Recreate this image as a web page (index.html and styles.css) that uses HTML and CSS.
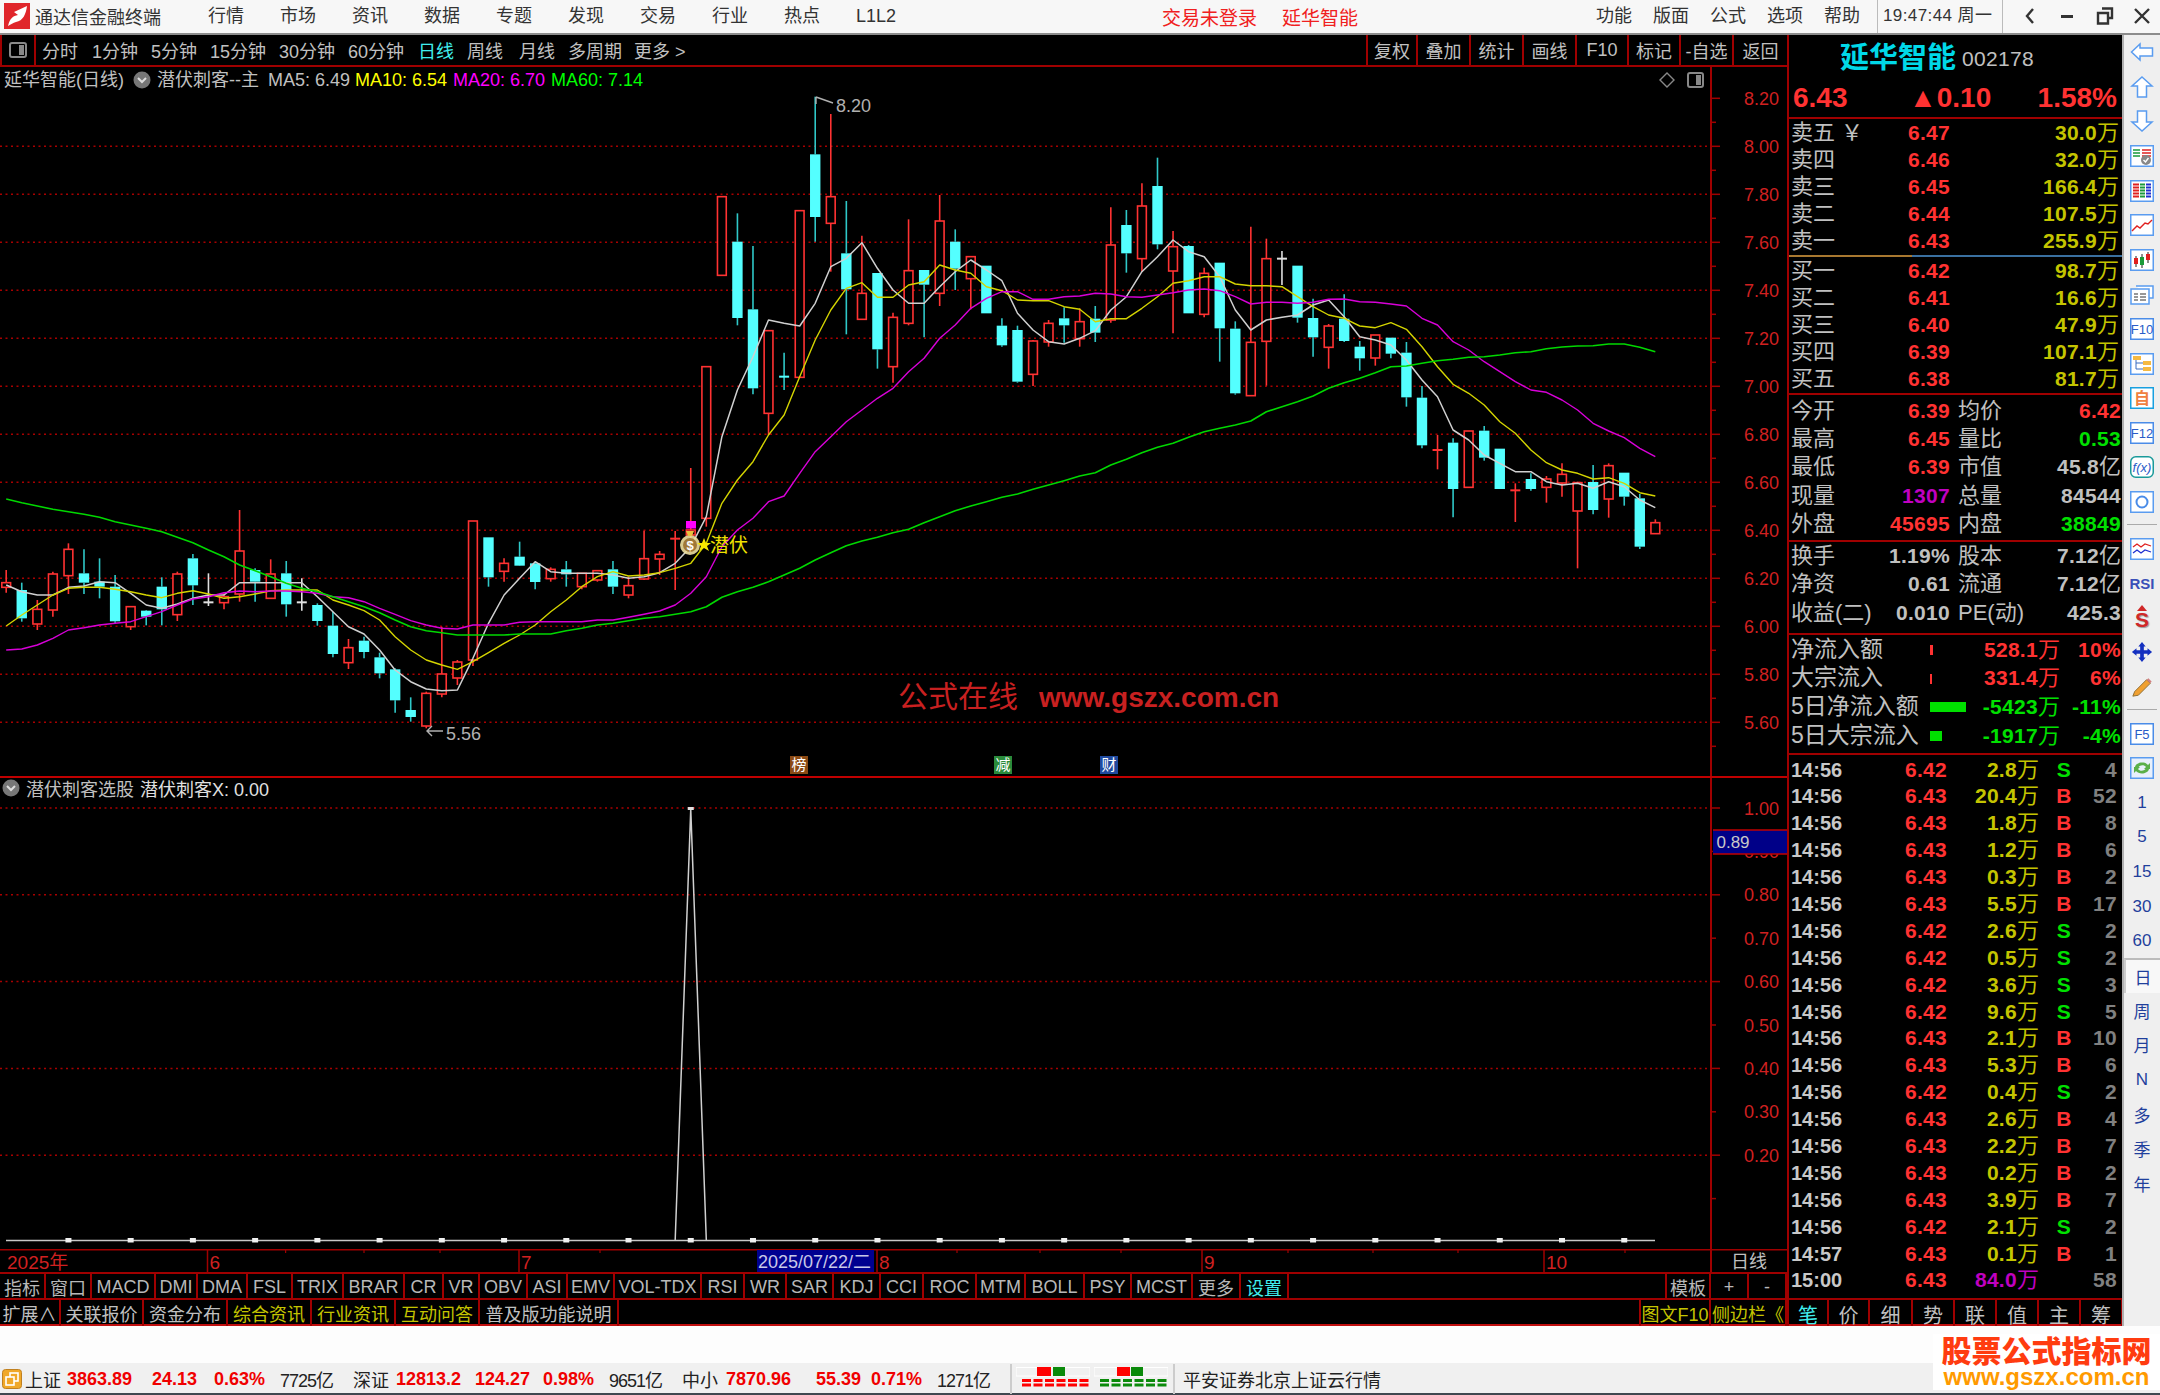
FILE: index.html
```html
<!DOCTYPE html>
<html lang="zh-CN">
<head>
<meta charset="utf-8">
<title>通达信金融终端</title>
<link rel="stylesheet" href="styles.css">
</head>
<body>
<div class="app">
  <header class="titlebar">
    <svg class="logo" viewBox="0 0 26 26"><rect width="26" height="26" fill="#e0262b"/><path d="M4 23 C6 15 9 13 14 12 L10 9 L23 3 C22 11 19 18 12 19 C9 20 7 21 4 23Z" fill="#fff"/></svg>
    <span class="app-name">通达信金融终端</span>
    <nav class="menu menu-main"><span>行情</span><span>市场</span><span>资讯</span><span>数据</span><span>专题</span><span>发现</span><span>交易</span><span>行业</span><span>热点</span><span>L1L2</span></nav>
    <div class="login"><span>交易未登录</span><span>延华智能</span></div>
    <nav class="menu menu-right"><span>功能</span><span>版面</span><span>公式</span><span>选项</span><span>帮助</span></nav>
    <div class="clock">19:47:44 周一</div>
    <div class="winbtns">
      <svg viewBox="0 0 20 20"><path d="M13 3 L7 10 L13 17" fill="none" stroke="#333" stroke-width="2.4"/></svg>
      <svg viewBox="0 0 20 20"><rect x="4" y="9" width="12" height="3" fill="#333"/></svg>
      <svg viewBox="0 0 20 20"><path d="M7 2.5 H17 V12 H13 M3 7 H13 V17.5 H3 Z" fill="none" stroke="#333" stroke-width="2.4"/></svg>
      <svg viewBox="0 0 20 20"><path d="M3 3 L17 17 M17 3 L3 17" stroke="#333" stroke-width="2.4"/></svg>
    </div>
  </header>

  <div class="body">
    <main class="main">
      <div class="period-bar">
        <div class="period-toggle"><svg viewBox="0 0 20 18"><rect x="2" y="2" width="16" height="14" rx="2" fill="none" stroke="#8a8a8a" stroke-width="2"/><rect x="11" y="4" width="5" height="10" fill="#8a8a8a"/></svg></div>
        <div class="periods"><span>分时</span><span>1分钟</span><span>5分钟</span><span>15分钟</span><span>30分钟</span><span>60分钟</span><span class="cyan">日线</span><span>周线</span><span>月线</span><span>多周期</span><span>更多 &gt;</span></div>
        <div class="chart-btns"><span>复权</span><span>叠加</span><span>统计</span><span>画线</span><span>F10</span><span>标记</span><span>-自选</span><span>返回</span></div>
      </div>

      <div class="legend">
        <span class="l-name">延华智能(日线)</span>
        <svg class="l-dot" viewBox="0 0 18 18"><circle cx="9" cy="9" r="8.5" fill="#777"/><path d="M5 7 L9 11 L13 7" fill="none" stroke="#ddd" stroke-width="2"/></svg>
        <span class="l-formula">潜伏刺客--主</span>
        <span class="l-ma5">MA5: 6.49</span>
        <span class="l-ma10">MA10: 6.54</span>
        <span class="l-ma20">MA20: 6.70</span>
        <span class="l-ma60">MA60: 7.14</span>
        <svg class="l-tools" viewBox="0 0 46 18"><path d="M8 2 L15 9 L8 16 L1 9 Z" fill="none" stroke="#888" stroke-width="1.4"/><rect x="29" y="2" width="15" height="14" rx="2" fill="none" stroke="#888" stroke-width="2"/><rect x="37" y="4" width="5" height="10" fill="#888"/></svg>
      </div>
      <svg id="price-chart" class="chart price-chart" viewBox="0 87 1787 689"></svg>

      <div class="ind-legend">
        <svg class="l-dot" viewBox="0 0 18 18"><circle cx="9" cy="9" r="8.5" fill="#777"/><path d="M5 7 L9 11 L13 7" fill="none" stroke="#ddd" stroke-width="2"/></svg>
        <span>潜伏刺客选股</span><span class="ind-val">潜伏刺客X: 0.00</span>
      </div>
      <svg id="ind-chart" class="chart ind-chart" viewBox="0 798 1787 451"></svg>
      <svg id="date-axis" class="chart date-axis" viewBox="0 1249 1787 23"></svg>

      <div class="indicator-bar">
        <span>指标</span><span>窗口</span><span>MACD</span><span>DMI</span><span>DMA</span><span>FSL</span><span>TRIX</span><span>BRAR</span><span>CR</span><span>VR</span><span>OBV</span><span>ASI</span><span>EMV</span><span>VOL-TDX</span><span>RSI</span><span>WR</span><span>SAR</span><span>KDJ</span><span>CCI</span><span>ROC</span><span>MTM</span><span>BOLL</span><span>PSY</span><span>MCST</span><span>更多</span><span class="cyan">设置</span>
        <span class="tpl">模板</span><span>+</span><span>-</span>
      </div>
      <div class="ext-bar">
        <span>扩展∧</span><span>关联报价</span><span>资金分布</span><span class="yellow">综合资讯</span><span class="yellow">行业资讯</span><span class="yellow">互动问答</span><span>普及版功能说明</span>
        <span class="yellow ext-f10">图文F10</span><span class="yellow">侧边栏《</span>
      </div>
    </main>

    <aside class="quote">
      <div class="q-head"><span class="q-name">延华智能</span><span class="q-code">002178</span></div>
      <div class="q-price"><span>6.43</span><span>▲0.10</span><span>1.58%</span></div>

      <div class="q-book q-sell">
        <div class="book-row"><span class="lb">卖五 ￥</span><b class="red">6.47</b><b class="vol">30.0<i>万</i></b></div>
        <div class="book-row"><span class="lb">卖四</span><b class="red">6.46</b><b class="vol">32.0<i>万</i></b></div>
        <div class="book-row"><span class="lb">卖三</span><b class="red">6.45</b><b class="vol">166.4<i>万</i></b></div>
        <div class="book-row"><span class="lb">卖二</span><b class="red">6.44</b><b class="vol">107.5<i>万</i></b></div>
        <div class="book-row"><span class="lb">卖一</span><b class="red">6.43</b><b class="vol">255.9<i>万</i></b></div>
      </div>
      <div class="q-split"></div>
      <div class="q-book q-buy">
        <div class="book-row"><span class="lb">买一</span><b class="red">6.42</b><b class="vol">98.7<i>万</i></b></div>
        <div class="book-row"><span class="lb">买二</span><b class="red">6.41</b><b class="vol">16.6<i>万</i></b></div>
        <div class="book-row"><span class="lb">买三</span><b class="red">6.40</b><b class="vol">47.9<i>万</i></b></div>
        <div class="book-row"><span class="lb">买四</span><b class="red">6.39</b><b class="vol">107.1<i>万</i></b></div>
        <div class="book-row"><span class="lb">买五</span><b class="red">6.38</b><b class="vol">81.7<i>万</i></b></div>
      </div>

      <div class="q-stats">
        <div class="stat-row"><span class="lb">今开</span><b class="red">6.39</b><span class="lb">均价</span><b class="red">6.42</b></div>
        <div class="stat-row"><span class="lb">最高</span><b class="red">6.45</b><span class="lb">量比</span><b class="green">0.53</b></div>
        <div class="stat-row"><span class="lb">最低</span><b class="red">6.39</b><span class="lb">市值</span><b class="grey">45.8<i>亿</i></b></div>
        <div class="stat-row"><span class="lb">现量</span><b class="purple">1307</b><span class="lb">总量</span><b class="grey">84544</b></div>
        <div class="stat-row"><span class="lb">外盘</span><b class="red">45695</b><span class="lb">内盘</span><b class="green">38849</b></div>
      </div>
      <div class="q-fund">
        <div class="stat-row"><span class="lb">换手</span><b class="grey">1.19%</b><span class="lb">股本</span><b class="grey">7.12<i>亿</i></b></div>
        <div class="stat-row"><span class="lb">净资</span><b class="grey">0.61</b><span class="lb">流通</span><b class="grey">7.12<i>亿</i></b></div>
        <div class="stat-row"><span class="lb">收益(二)</span><b class="grey">0.010</b><span class="lb">PE(动)</span><b class="grey">425.3</b></div>
      </div>
      <div class="q-flow">
        <div class="flow-row"><span class="lb">净流入额</span><span class="flow-bar"><em class="bg-red" style="width:3px"></em></span><b class="red">528.1<i>万</i></b><b class="red">10%</b></div>
        <div class="flow-row"><span class="lb">大宗流入</span><span class="flow-bar"><em class="bg-red" style="width:2px"></em></span><b class="red">331.4<i>万</i></b><b class="red">6%</b></div>
        <div class="flow-row"><span class="lb">5日净流入额</span><span class="flow-bar"><em class="bg-green" style="width:36px"></em></span><b class="green">-5423<i>万</i></b><b class="green">-11%</b></div>
        <div class="flow-row"><span class="lb">5日大宗流入</span><span class="flow-bar"><em class="bg-green" style="width:12px"></em></span><b class="green">-1917<i>万</i></b><b class="green">-4%</b></div>
      </div>

      <div class="q-ticks">
        <div class="tick"><b class="time">14:56</b><b class="red">6.42</b><b class="vol">2.8<i>万</i></b><b class="green">S</b><b class="cnt">4</b></div>
        <div class="tick"><b class="time">14:56</b><b class="red">6.43</b><b class="vol">20.4<i>万</i></b><b class="red">B</b><b class="cnt">52</b></div>
        <div class="tick"><b class="time">14:56</b><b class="red">6.43</b><b class="vol">1.8<i>万</i></b><b class="red">B</b><b class="cnt">8</b></div>
        <div class="tick"><b class="time">14:56</b><b class="red">6.43</b><b class="vol">1.2<i>万</i></b><b class="red">B</b><b class="cnt">6</b></div>
        <div class="tick"><b class="time">14:56</b><b class="red">6.43</b><b class="vol">0.3<i>万</i></b><b class="red">B</b><b class="cnt">2</b></div>
        <div class="tick"><b class="time">14:56</b><b class="red">6.43</b><b class="vol">5.5<i>万</i></b><b class="red">B</b><b class="cnt">17</b></div>
        <div class="tick"><b class="time">14:56</b><b class="red">6.42</b><b class="vol">2.6<i>万</i></b><b class="green">S</b><b class="cnt">2</b></div>
        <div class="tick"><b class="time">14:56</b><b class="red">6.42</b><b class="vol">0.5<i>万</i></b><b class="green">S</b><b class="cnt">2</b></div>
        <div class="tick"><b class="time">14:56</b><b class="red">6.42</b><b class="vol">3.6<i>万</i></b><b class="green">S</b><b class="cnt">3</b></div>
        <div class="tick"><b class="time">14:56</b><b class="red">6.42</b><b class="vol">9.6<i>万</i></b><b class="green">S</b><b class="cnt">5</b></div>
        <div class="tick"><b class="time">14:56</b><b class="red">6.43</b><b class="vol">2.1<i>万</i></b><b class="red">B</b><b class="cnt">10</b></div>
        <div class="tick"><b class="time">14:56</b><b class="red">6.43</b><b class="vol">5.3<i>万</i></b><b class="red">B</b><b class="cnt">6</b></div>
        <div class="tick"><b class="time">14:56</b><b class="red">6.42</b><b class="vol">0.4<i>万</i></b><b class="green">S</b><b class="cnt">2</b></div>
        <div class="tick"><b class="time">14:56</b><b class="red">6.43</b><b class="vol">2.6<i>万</i></b><b class="red">B</b><b class="cnt">4</b></div>
        <div class="tick"><b class="time">14:56</b><b class="red">6.43</b><b class="vol">2.2<i>万</i></b><b class="red">B</b><b class="cnt">7</b></div>
        <div class="tick"><b class="time">14:56</b><b class="red">6.43</b><b class="vol">0.2<i>万</i></b><b class="red">B</b><b class="cnt">2</b></div>
        <div class="tick"><b class="time">14:56</b><b class="red">6.43</b><b class="vol">3.9<i>万</i></b><b class="red">B</b><b class="cnt">7</b></div>
        <div class="tick"><b class="time">14:56</b><b class="red">6.42</b><b class="vol">2.1<i>万</i></b><b class="green">S</b><b class="cnt">2</b></div>
        <div class="tick"><b class="time">14:57</b><b class="red">6.43</b><b class="vol">0.1<i>万</i></b><b class="red">B</b><b class="cnt">1</b></div>
        <div class="tick"><b class="time">15:00</b><b class="red">6.43</b><b class="purple">84.0<i>万</i></b><b></b><b class="cnt">58</b></div>
      </div>
      <div class="q-tabs"><span class="cyan">笔</span><span>价</span><span>细</span><span>势</span><span>联</span><span>值</span><span>主</span><span>筹</span></div>
    </aside>

    <nav class="sidebar">
      <div class="tool"><svg viewBox="0 0 24 22"><path d="M1.5 11 L10 3 V7 H22.5 V15 H10 V19 Z" fill="#fff" stroke="#5a9cf0" stroke-width="1.5"/></svg></div>
      <div class="tool"><svg viewBox="0 0 24 22"><path d="M12 1 L22 10 H16.5 V21 H7.5 V10 H2 Z" fill="#fff" stroke="#5a9cf0" stroke-width="1.5"/></svg></div>
      <div class="tool"><svg viewBox="0 0 24 22"><path d="M7.5 1 H16.5 V12 H22 L12 21 L2 12 H7.5 Z" fill="#fff" stroke="#5a9cf0" stroke-width="1.5"/></svg></div>
      <div class="tool"><svg viewBox="0 0 24 22"><rect x=".75" y=".75" width="22.5" height="20.5" fill="#fff" stroke="#5a9cf0" stroke-width="1.5"/><path d="M3 5 H10 M3 8 H10 M3 11 H10" stroke="#1a9a3a" stroke-width="1.6"/><path d="M12 5 H21 M12 8 H21 M12 11 H21" stroke="#e02020" stroke-width="1.6"/><circle cx="16" cy="15" r="5" fill="#888"/><path d="M13.5 15 L15.5 17 L18.5 13" fill="none" stroke="#fff" stroke-width="1.4"/></svg></div>
      <div class="tool"><svg viewBox="0 0 24 22"><rect x=".75" y=".75" width="22.5" height="20.5" fill="#fff" stroke="#5a9cf0" stroke-width="1.5"/><path d="M3 4.5 H9 M3 7.5 H9 M3 10.5 H9 M3 13.5 H9 M3 16.5 H9" stroke="#e02020" stroke-width="1.8"/><path d="M10 4.5 H15 M10 7.5 H15 M10 10.5 H15 M10 13.5 H15 M10 16.5 H15" stroke="#1a9a3a" stroke-width="1.8"/><path d="M16 4.5 H21 M16 7.5 H21 M16 10.5 H21 M16 13.5 H21 M16 16.5 H21" stroke="#2030d0" stroke-width="1.8"/></svg></div>
      <div class="tool"><svg viewBox="0 0 24 22"><rect x=".75" y=".75" width="22.5" height="20.5" fill="#fff" stroke="#5a9cf0" stroke-width="1.5"/><path d="M2 17 L7 12 L10 14 L15 9 L18 10 L22 6" fill="none" stroke="#e02020" stroke-width="1.4"/></svg></div>
      <div class="tool"><svg viewBox="0 0 24 22"><rect x=".75" y=".75" width="22.5" height="20.5" fill="#fff" stroke="#5a9cf0" stroke-width="1.5"/><path d="M6 7 V18 M12 5 V19 M18 3 V14" stroke="#222" stroke-width="1"/><rect x="4" y="9" width="4" height="6" fill="#e02020"/><rect x="10" y="8" width="4" height="8" fill="#1a9a3a"/><rect x="16" y="5" width="4" height="6" fill="#e02020"/></svg></div>
      <div class="tool"><svg viewBox="0 0 24 22"><path d="M6 3 H23 V15 H19" fill="#fff" stroke="#5a9cf0" stroke-width="1.5"/><rect x="1" y="6" width="18" height="15" fill="#fff" stroke="#5a9cf0" stroke-width="1.5"/><path d="M4 11 H8 M4 14 H8 M4 17 H8 M10 11 H16 M10 14 H16 M10 17 H16" stroke="#777" stroke-width="1.6"/></svg></div>
      <div class="tool"><svg viewBox="0 0 24 22"><rect x=".75" y=".75" width="22.5" height="20.5" fill="#fff" stroke="#4a8ce8" stroke-width="1.5"/><text class="ico-txt" x="12" y="16" text-anchor="middle">F10</text></svg></div>
      <div class="tool"><svg viewBox="0 0 24 22"><rect x=".75" y=".75" width="22.5" height="20.5" fill="#fff" stroke="#5a9cf0" stroke-width="1.5"/><rect x="3" y="3" width="8" height="4" fill="#f5b942"/><rect x="13" y="8" width="8" height="4" fill="#f5b942"/><rect x="13" y="14" width="8" height="4" fill="#f5b942"/><path d="M6 7 V16 H13 M6 10 H13" fill="none" stroke="#3a6cc0"/></svg></div>
      <div class="tool"><svg viewBox="0 0 24 22"><rect x=".75" y=".75" width="22.5" height="20.5" fill="#fff" stroke="#18a0e0" stroke-width="1.5"/><text class="ico-zi" x="12" y="17" text-anchor="middle">自</text></svg></div>
      <div class="tool"><svg viewBox="0 0 24 22"><rect x=".75" y=".75" width="22.5" height="20.5" fill="#fff" stroke="#4a8ce8" stroke-width="1.5"/><text class="ico-txt" x="12" y="16" text-anchor="middle">F12</text></svg></div>
      <div class="tool"><svg viewBox="0 0 24 22"><rect x=".75" y=".75" width="22.5" height="20.5" rx="5" fill="#fff" stroke="#1a9a9a" stroke-width="1.5"/><text class="ico-fx" x="12" y="16" text-anchor="middle">f(x)</text></svg></div>
      <div class="tool"><svg viewBox="0 0 24 22"><rect x=".75" y=".75" width="22.5" height="20.5" fill="#fff" stroke="#5a9cf0" stroke-width="1.5"/><circle cx="12" cy="11" r="5.5" fill="none" stroke="#4a8ce8" stroke-width="2"/></svg></div>
      <div class="tool-sep"></div>
      <div class="tool"><svg viewBox="0 0 24 22"><rect x=".75" y=".75" width="22.5" height="20.5" fill="#fff" stroke="#5a9cf0" stroke-width="1.5"/><path d="M3 9 L7 6 L11 9 L15 6 L21 8" fill="none" stroke="#e02020" stroke-width="1.3"/><path d="M3 15 L7 12 L11 15 L15 12 L21 14" fill="none" stroke="#2030d0" stroke-width="1.3"/></svg></div>
      <div class="tool"><span class="ico-rsi">RSI</span></div>
      <div class="tool tool-s"><svg class="ico-s-up" viewBox="0 0 10 6"><path d="M5 0 L10 6 H0 Z" fill="#d02828"/></svg><span class="ico-s">S</span></div>
      <div class="tool"><svg viewBox="0 0 24 24"><path d="M12 1 L16 6 H14 V10 H18 V8 L23 12 L18 16 V14 H14 V18 H16 L12 23 L8 18 H10 V14 H6 V16 L1 12 L6 8 V10 H10 V6 H8 Z" fill="#1430c0"/></svg></div>
      <div class="tool"><svg viewBox="0 0 24 24"><path d="M4 17 L17 4 L21 8 L8 21 L2 22 Z" fill="#f0a030" stroke="#8a6a30"/><path d="M17 4 L21 8 L22.5 6 L19 2.5 Z" fill="#d08080"/></svg></div>
      <div class="tool-sep"></div>
      <div class="tool"><svg viewBox="0 0 24 22"><rect x=".75" y=".75" width="22.5" height="20.5" fill="#fff" stroke="#4a8ce8" stroke-width="1.5"/><text class="ico-txt" x="12" y="16" text-anchor="middle">F5</text></svg></div>
      <div class="tool"><svg viewBox="0 0 24 22"><rect x=".75" y=".75" width="22.5" height="20.5" fill="#e8f0fc" stroke="#5a9cf0" stroke-width="1.5"/><path d="M5 10 C6 5 15 4 18 8 L20 6 V12 H14 L16 10 C14 7 9 8 8 11 Z M19 12 C18 17 9 18 6 14 L4 16 V10 H10 L8 12 C10 15 15 14 16 11 Z" fill="#5ab04a"/></svg></div>
      <div class="tool tool-t">1</div><div class="tool tool-t">5</div><div class="tool tool-t">15</div><div class="tool tool-t">30</div><div class="tool tool-t">60</div>
      <div class="tool tool-t tool-on">日</div>
      <div class="tool tool-t">周</div><div class="tool tool-t">月</div><div class="tool tool-t">N</div><div class="tool tool-t">多</div><div class="tool tool-t">季</div><div class="tool tool-t">年</div>
    </nav>
  </div>

  <div class="blank"></div>

  <footer class="status">
    <svg class="st-ico" viewBox="0 0 20 20"><rect x=".5" y=".5" width="19" height="19" rx="3" fill="#f0a828" stroke="#c08020"/><rect x="8" y="4" width="8" height="8" fill="none" stroke="#fff" stroke-width="1.6"/><rect x="4" y="8" width="8" height="8" fill="#f0a828" stroke="#fff" stroke-width="1.6"/></svg>
    <span class="st-lb st-sh">上证</span><b class="st-a">3863.89</b><b class="st-b">24.13</b><b class="st-c">0.63%</b><span class="st-d">7725亿</span>
    <span class="st-lb st-sz">深证</span><b class="st-a2">12813.2</b><b class="st-b2">124.27</b><b class="st-c">0.98%</b><span class="st-d">9651亿</span>
    <span class="st-lb st-zx">中小</span><b class="st-a3">7870.96</b><b class="st-b3">55.39</b><b class="st-c">0.71%</b><span class="st-d">1271亿</span>
    <div class="st-bars">
      <svg viewBox="0 0 74 20"><path d="M0 .5 H74 V9 H0 Z" fill="none" stroke="#fff"/><rect x="21" y="0" width="14" height="9" fill="#f00"/><rect x="37" y="0" width="12" height="9" fill="#0a8a0a"/><path d="M6 13.5 H74" stroke="#f00" stroke-width="3" stroke-dasharray="9 2.5"/><path d="M6 18 H74" stroke="#f00" stroke-width="3" stroke-dasharray="9 2.5"/></svg>
      <svg viewBox="0 0 74 20"><path d="M0 .5 H74 V9 H0 Z" fill="none" stroke="#fff"/><rect x="23" y="0" width="13" height="9" fill="#f00"/><rect x="37" y="0" width="12" height="9" fill="#0a8a0a"/><path d="M6 13.5 H74" stroke="#0a8a0a" stroke-width="3" stroke-dasharray="9 2.5"/><path d="M6 18 H74" stroke="#0a8a0a" stroke-width="3" stroke-dasharray="9 2.5"/></svg>
    </div>
    <span class="st-broker">平安证券北京上证云行情</span>
  </footer>

  <div class="watermark"><strong>股票公式指标网</strong><em>www.gszx.com.cn</em></div>
</div>
<script src="chart.js"></script>
</body>
</html>
```
FILE: styles.css
```css
* { box-sizing: border-box; }
html, body { margin: 0; padding: 0; background: #f0f0f0; }
body { font-family: "Liberation Sans", "Noto Sans CJK SC", sans-serif; }
.app { position: relative; width: 2160px; height: 1395px; display: flex; flex-direction: column; overflow: hidden; }
i, em { font-style: normal; }
.cyan { color: #40eeee !important; }
.yellow { color: #c4c400 !important; }

/* title bar */
.titlebar { height: 35px; flex: none; display: flex; align-items: center; background: #f7f7f7; border-bottom: 2px solid #8c8c8c; font-size: 18px; color: #333; white-space: nowrap; padding-bottom: 1px; }
.logo { width: 26px; height: 26px; margin-left: 4px; flex: none; }
.app-name { margin-left: 5px; width: 173px; flex: none; }
.menu { display: flex; flex: none; align-items: baseline; line-height: 26px; }
.menu span { display: block; }
.menu-main { width: 720px; }
.menu-main span { width: 72px; }
.login { margin-left: 234px; width: 434px; flex: none; display: flex; gap: 25px; color: #f02020; font-size: 19px; }
.menu-right { width: 281px; }
.menu-right span { margin-right: 21px; }
.clock { width: 126px; flex: none; height: 33px; line-height: 31px; padding-left: 5px; border-left: 1px solid #bbb; border-right: 1px solid #bbb; font-size: 17px; letter-spacing: .4px; }
.winbtns { flex: 1; display: flex; justify-content: space-between; padding: 0 8px 0 17px; }
.winbtns svg { width: 20px; height: 20px; }

/* body */
.body { height: 1291px; flex: none; display: flex; background: #000; }
.main { width: 1787px; flex: none; display: flex; flex-direction: column; }
.chart { display: block; width: 1787px; flex: none; }
.price-chart { height: 689px; }
.ind-chart { height: 451px; }
.date-axis { height: 23px; }

.period-bar { height: 32px; flex: none; display: flex; border-bottom: 2px solid #a00000; font-size: 18px; color: #c0c0c0; white-space: nowrap; }
.period-toggle { width: 36px; border-left: 2px solid #a00000; border-right: 2px solid #a00000; display: flex; align-items: center; justify-content: center; }
.period-toggle svg { width: 20px; height: 18px; }
.periods { display: grid; grid-template-columns: 50px 59px 59px 69px 69px 70px 49px 52px 49px 66px 60px; padding-left: 6px; align-items: center; }
.chart-btns { margin-left: auto; width: 421px; display: grid; grid-template-columns: 50px 53px 53px 53px 52px 52px 53px 55px; }
.chart-btns span { border-left: 2px solid #a00000; display: flex; align-items: center; justify-content: center; }

.legend { height: 20px; flex: none; display: flex; align-items: baseline; line-height: 26px; font-size: 18px; color: #c0c0c0; white-space: nowrap; padding-left: 4px; background: linear-gradient(#a00000, #a00000) 1710px 0 / 2px 100% no-repeat; }
.l-name { width: 129px; }
.l-dot { width: 18px; height: 18px; flex: none; align-self: center; }
.legend .l-dot { margin-top: 5px; }
.l-formula { margin-left: 6px; width: 111px; }
.l-ma5 { width: 87px; }
.l-ma10 { width: 98px; color: #ffff00; }
.l-ma20 { width: 98px; color: #ff00ff; }
.l-ma60 { width: 100px; color: #00ff00; }
.l-tools { margin: 5px 82px 0 auto; width: 46px; height: 18px; align-self: center; }

.ind-legend { height: 22px; flex: none; display: flex; align-items: center; gap: 6px; padding-left: 2px; font-size: 18px; color: #c0c0c0; border-top: 2px solid #c00000; background: linear-gradient(#a00000, #a00000) 1710px 0 / 2px 100% no-repeat; }
.ind-val { color: #e0e0e0; }

/* svg chart text */
.axis-label { font-size: 18px; fill: #d02020; text-anchor: end; }
.date-label { font-size: 19px; fill: #d02020; }
.date-cursor { font-size: 18px; fill: #c8c8e8; }
.date-unit { font-size: 18px; fill: #c0c0c0; text-anchor: middle; }
.note { font-size: 18px; fill: #b0b0b0; }
.signal { font-size: 19px; fill: #f0e000; }
.tag { font-size: 15px; fill: #fff; text-anchor: middle; }
.gs-cn { font-size: 30px; fill: #c82020; }
.gs-en { font-size: 28px; font-weight: bold; fill: #c82020; }
.ind-current { font-size: 17px; fill: #c8c8c8; text-anchor: middle; }

.indicator-bar { height: 26px; flex: none; display: grid; grid-template-columns: 46px 46px 64px 42px 50px 45px 51px 61px 39px 36px 48px 40px 47px 87px 43px 42px 47px 47px 43px 53px 49px 59px 47px 61px 48px 48px 376px 46px 38px 38px; font-size: 18px; color: #b8b8b8; white-space: nowrap; border-top: 2px solid #a00000; }
.indicator-bar span { display: flex; align-items: center; justify-content: center; border-right: 2px solid #a00000; }
.indicator-bar .tpl { grid-column: 28; border-left: 2px solid #a00000; }
.ext-bar { height: 28px; flex: none; display: grid; grid-template-columns: 61px 83px 84px 84px 84px 84px 139px 1020px 72px 76px; font-size: 18px; color: #c0c0c0; white-space: nowrap; border-top: 2px solid #a00000; border-bottom: 2px solid #c01010; }
.ext-bar span { display: flex; align-items: center; justify-content: center; border-right: 2px solid #a00000; }
.ext-bar .ext-f10 { grid-column: 9; border-left: 2px solid #a00000; }

/* quote panel */
.quote { width: 335px; flex: none; display: flex; flex-direction: column; border-left: 2px solid #a00000; color: #c0c0c0; white-space: nowrap; }
.quote b { font-weight: 700; font-size: 21px; letter-spacing: .3px; }
.quote i { font-weight: 400; font-size: 22px; letter-spacing: 0; }
.red { color: #ff3232; }
.green { color: #00e000; }
.grey { color: #c0c0c0; }
.purple { color: #c000c0; }
.lb { font-size: 22px; color: #c0c0c0; }
.q-head { height: 43px; flex: none; display: flex; align-items: center; padding: 0 0 3px 51px; }
.q-name { font-size: 29px; font-weight: 700; color: #00d8e8; }
.q-code { font-size: 21px; color: #c0c0c0; margin-left: 6px; padding-top: 8px; letter-spacing: .3px; }
.q-price { height: 41px; flex: none; display: grid; grid-template-columns: 116px 121px 1fr; align-items: center; padding: 0 5px 0 4px; border-bottom: 2px solid #a00000; color: #ff3232; font-size: 28px; font-weight: 700; }
.q-price span:last-child { text-align: right; }
.q-book { flex: none; padding-top: .5px; }
.q-sell { height: 136px; }
.q-buy { height: 138px; border-bottom: 2px solid #a00000; }
.q-split { height: 2px; flex: none; background: linear-gradient(90deg, #a87830 123px, #3a70a0 123px); }
.book-row, .stat-row, .flow-row, .tick { align-items: baseline; line-height: 26px; }
.book-row { height: 27px; display: grid; grid-template-columns: 60px 99px 1fr; padding: 0 3px 0 2px; }
.book-row b:nth-child(2) { text-align: right; }
.book-row b:nth-child(3) { text-align: right; }
.vol { color: #c4c400; }
.stat-row { display: grid; grid-template-columns: 60px 99px 68px 1fr; padding: 0 1px 0 2px; }
.stat-row b { text-align: right; }
.stat-row .lb:nth-child(3) { padding-left: 8px; }
.q-stats { height: 146.5px; flex: none; padding-top: 2.5px; border-bottom: 2px solid #a00000; }
.q-stats .stat-row { height: 28.4px; }
.q-fund { height: 93.5px; flex: none; padding-top: 1.25px; border-bottom: 2px solid #a00000; }
.q-fund .stat-row { height: 28.5px; }
.q-flow { height: 120px; flex: none; padding-top: .65px; border-bottom: 2px solid #a00000; }
.flow-row { height: 28.7px; display: grid; grid-template-columns: 139px 40px 90px 1fr; padding: 0 1px 0 2px; }
.flow-row .lb { font-size: 23px; }
.flow-row b { text-align: right; }
.flow-bar { display: flex; align-items: center; align-self: center; }
.flow-bar em { display: block; height: 10px; }
.bg-red { background: #ff3232; }
.bg-green { background: #00e000; }
.q-ticks { height: 543px; flex: none; padding-top: 1.5px; }
.tick { height: 26.9px; display: grid; grid-template-columns: 60px 96px 92px 50px 28px; padding-left: 2px; font-size: 20px; color: #c8c8c8; }
.tick b { text-align: right; }
.tick .time { text-align: left; color: #c8c8c8; font-size: 20px; letter-spacing: 0; }
.tick b:nth-child(4) { text-align: center; }
.tick .cnt { color: #808080; }
.q-tabs { height: 28px; flex: none; display: grid; grid-template-columns: 40px 41px 43px 42px 42px 42px 42px 42px; font-size: 20px; color: #c0c0c0; border-top: 2px solid #a00000; border-bottom: 2px solid #c01010; }
.q-tabs span { display: flex; align-items: center; justify-content: center; border-right: 2px solid #a00000; }

/* sidebar */
.sidebar { flex: 1; display: flex; flex-direction: column; background: #efefef; border-left: 2px solid #b0b0b0; }
.tool { height: 34.6px; flex: none; display: flex; align-items: center; justify-content: center; }
.tool svg { width: 24px; height: 22px; }
.tool-sep { height: 12px; flex: none; }
.tool-sep::after { content: ""; display: block; height: 1px; margin: 5px 3px 0; background: #aaa; }
.tool-t { font-size: 17px; color: #1f3f9c; }
.tool-on { background: #f8f8f8; border-top: 2px solid #bbb; border-left: 2px solid #ccc; }
.ico-txt { font-size: 13px; fill: #2a5cc8; }
.ico-zi { font-size: 16px; font-weight: 700; fill: #f08040; }
.ico-fx { font-size: 13px; font-style: italic; fill: #2a5cc8; }
.ico-rsi { font-size: 15px; font-weight: 700; color: #3a50b8; }
.tool-s { flex-direction: column; }
.tool .ico-s-up { width: 10px; height: 6px; margin-bottom: -1px; }
.ico-s { font-size: 21px; line-height: 20px; font-weight: 700; color: #d02828; text-shadow: 1px 1px 1px #999; }

/* bottom */
.blank { height: 37px; flex: none; background: #fdfdfd; }
.status { height: 32px; flex: none; display: flex; align-items: center; background: #f0f0f0; border-bottom: 2px solid #404850; font-size: 18px; color: #222; white-space: nowrap; padding: 2px 0 0 2px; }
.status b { color: #f00000; }
.st-ico { width: 20px; height: 20px; flex: none; }
.st-lb { font-size: 18px; }
.st-sh { margin-left: 3px; width: 42px; }
.st-a { width: 85px; }
.st-b { width: 62px; }
.st-b3 { width: 55px; }
.st-c { width: 66px; }
.st-d { width: 73px; font-size: 18px; letter-spacing: -1px; }
.st-sz { width: 43px; }
.st-a2 { width: 79px; }
.st-b2 { width: 68px; }
.st-zx { width: 44px; }
.st-a3 { width: 90px; }
.st-bars { width: 165px; height: 30px; border-left: 2px solid #ccc; border-right: 2px solid #ccc; padding: 3px 3px 0 4px; display: flex; gap: 4px; align-items: flex-start; flex: none; }
.st-bars svg { width: 74px; height: 20px; flex: none; }
.st-broker { margin-left: 8px; }

.watermark { position: absolute; right: 0; top: 1334px; width: 227px; height: 56px; background: #fff; display: flex; flex-direction: column; align-items: center; padding-top: 5px; font-weight: 700; }
.watermark strong { font-size: 30px; line-height: 26px; color: #ff3c10; }
.watermark em { font-size: 24px; line-height: 23px; color: #ff9a00; }
```
FILE: chart.js
```js
(function () {
  var NS = "http://www.w3.org/2000/svg";
  var X = function (i) { return 6.2 + 15.558 * i; };
  var priceY = function (p) { return 146.3 + (8 - p) * 240; };
  var base = function (i) { return i <= 44 ? 480 : i <= 78 ? 90 : 140; };
  var Y = function (i, z) { return base(i) + z / 3; };

  function el(parent, name, attrs, text) {
    var n = document.createElementNS(NS, name);
    for (var k in attrs) n.setAttribute(k, attrs[k]);
    if (text !== undefined) n.textContent = text;
    parent.appendChild(n);
    return n;
  }

  // type, body top, body bottom, wick top, wick bottom (r red, c cyan, w white doji)
  var candles = [
    "r 308 322 270 338","c 330 415 308 425","r 388 432 360 450","r 282 390 275 410","r 208 287 190 342",
    "c 280 308 208 342","c 305 320 235 355","c 320 424 285 430","r 380 440 378 450","c 392 410 390 436",
    "c 320 388 292 436","r 282 404 275 423","c 235 316 222 375","w 367 367 280 378","r 350 368 340 388",
    "r 213 342 90 365","c 270 305 265 365","r 282 355 238 355","c 280 373 243 410","w 367 367 295 392",
    "c 375 423 370 437","c 437 522 395 532","r 503 548 477 567","c 482 516 470 535","c 532 580 518 595",
    "c 568 661 565 698","c 690 711 652 725","r 640 738 635 745","r 582 642 440 652","r 546 594 540 615",
    "r 123 540 123 558","c 172 292 172 320","r 250 274 235 305","c 230 257 185 258","c 250 306 245 328",
    "r 268 296 262 305","c 268 283 243 320","r 280 320 280 328","r 272 300 270 305","c 268 320 243 342",
    "r 317 345 290 355","r 236 297 152 300","r 223 237 213 285","d 176 176 153 330","r 150 165 -36 190",
    "r 830 1285 830 1310","r 320 556 320 556","c 455 684 370 706","c 658 895 468 913","r 722 970 722 1035",
    "e 860 860 788 900","r 362 862 362 862","c 193 381 20 455","r 320 400 72 545","c 490 598 333 733",
    "r 610 688 437 688","c 549 778 549 836","r 682 830 668 878","r 542 700 388 706","c 540 584 540 742",
    "r 393 610 315 648","c 455 536 418 600","r 500 566 500 658","c 527 670 527 670","c 707 766 685 770",
    "c 720 875 707 878","r 753 853 750 888","r 700 756 690 770","c 685 706 652 758","r 695 746 655 770",
    "c 686 728 648 756","r 465 690 352 698","c 405 490 360 548","r 348 506 280 545","c 288 463 203 478",
    "r 470 543 423 730","c 468 670 465 670","r 550 673 533 682","c 518 715 518 815",
    "c 566 760 544 764","r 607 767 260 767","r 356 604 296 737","w 356 356 333 435","c 377 533 377 548",
    "c 534 592 476 650","r 558 622 552 686","c 536 603 463 606","c 620 655 603 692","r 585 654 585 677",
    "c 593 641 593 655","c 638 772 606 800","c 773 916 738 925","d 930 930 885 988","c 908 1047 895 1132",
    "r 873 1042 873 1042","c 872 953 858 962","c 926 1047 926 1047","d 1051 1051 1030 1146","c 1017 1047 1000 1052",
    "r 1017 1042 1008 1088","r 1003 1029 970 1070","r 1028 1113 1025 1285","c 1026 1110 975 1123","r 977 1077 970 1133",
    "c 998 1070 998 1097","c 1075 1220 1062 1227","r 1148 1181 1138 1181"
  ];

  var ma = [
    { color: "#d0d0d0", width: 1.5, z: [315,335,345,345,322,318,305,308,340,375,385,372,355,345,345,308,308,308,308,308,350,395,440,462,510,570,605,627,632,630,535,430,345,295,245,275,280,280,280,285,295,290,278,250,200,
      1280,1040,900,800,690,700,708,640,530,505,458,535,600,640,640,590,545,510,540,572,670,720,755,762,745,722,660,620,545,500,450,485,500,560,
      510,570,540,532,525,495,480,530,590,600,615,660,720,770,870,900,945,970,995,995,1025,1035,1030,1045,1025,1040,1080,1103] },
    { color: "#d4d400", width: 1.4, z: [438,405,375,345,325,322,322,328,335,345,353,340,332,342,355,350,342,332,330,330,330,360,375,392,420,470,510,540,555,568,545,518,490,465,435,395,360,320,290,275,288,285,278,265,250,
      1360,1240,1170,1115,1035,975,860,750,660,595,578,622,622,585,575,525,540,550,590,602,630,632,632,650,658,695,686,686,655,620,580,572,560,560,
      432,437,437,440,470,500,525,535,558,563,548,568,620,680,733,760,795,845,880,930,968,990,1000,1017,1013,1030,1058,1068] },
    { color: "#d800d8", width: 1.4, z: [510,507,495,475,450,443,435,430,425,410,395,375,357,350,338,333,335,333,333,335,340,350,353,365,385,403,422,435,445,447,435,435,435,427,425,425,425,425,420,420,412,403,393,375,340,
      1460,1370,1320,1285,1235,1218,1150,1085,1040,995,960,925,895,845,805,745,705,655,625,605,605,628,628,620,618,610,612,620,622,615,608,600,597,602,
      470,492,487,487,490,487,478,477,485,487,492,498,535,555,605,630,665,695,725,750,757,780,810,850,873,893,925,950] },
    { color: "#00d800", width: 1.6, z: [57,68,78,88,95,103,112,125,135,145,155,172,188,210,230,255,272,290,310,325,335,350,365,380,398,420,440,452,458,465,465,465,465,462,462,462,452,445,435,430,422,415,410,403,395,
      1550,1522,1505,1492,1475,1455,1435,1410,1388,1367,1353,1342,1328,1318,1298,1280,1262,1248,1235,1222,1212,1198,1185,1172,1158,1148,1125,1108,1088,1072,1060,1042,1025,1015,
      855,843,815,800,785,768,745,728,715,698,680,678,670,662,658,652,650,645,638,635,626,621,618,617,612,612,622,635] }
  ];

  /* ---------- price panel ---------- */
  var svg = document.getElementById("price-chart");
  var AXIS = "#a00000", GRID = "#a80000";
  var p, y;
  for (p = 56; p <= 80; p += 2) {
    y = priceY(p / 10);
    el(svg, "line", { x1: 0, x2: 1711, y1: y, y2: y, stroke: GRID, "stroke-width": 1.5, "stroke-dasharray": "2 3.5" });
  }
  el(svg, "line", { x1: 1711, x2: 1711, y1: 87, y2: 776, stroke: AXIS, "stroke-width": 2 });
  for (p = 55; p <= 82; p += 1) {
    y = priceY(p / 10);
    el(svg, "line", { x1: 1711, x2: p % 2 ? 1716 : 1720, y1: y, y2: y, stroke: AXIS, "stroke-width": 1.5 });
    if (p % 2 === 0) el(svg, "text", { class: "axis-label", x: 1779, y: y + 6.5 }, (p / 10).toFixed(2));
  }

  var COLORS = { r: "#ff3232", c: "#54ffff", w: "#e0e0e0", d: "#ff3232", e: "#54ffff" };
  var WICKS = { r: "#ff3232", c: "#2fc8c8", w: "#e0e0e0", d: "#ff3232", e: "#2fc8c8" };
  candles.forEach(function (s, i) {
    var v = s.split(" "), t = v[0];
    var top = Y(i, +v[1]), bot = Y(i, +v[2]), wt = Y(i, +v[3]), wb = Y(i, +v[4]), x = X(i);
    if (wt < top) el(svg, "line", { x1: x, x2: x, y1: wt, y2: top, stroke: WICKS[t], "stroke-width": 1.6 });
    if (wb > bot) el(svg, "line", { x1: x, x2: x, y1: bot, y2: wb, stroke: WICKS[t], "stroke-width": 1.6 });
    if (t === "w" || t === "d" || t === "e") {
      el(svg, "line", { x1: x - 5, x2: x + 5, y1: top, y2: top, stroke: COLORS[t], "stroke-width": 2 });
    } else if (t === "r") {
      el(svg, "rect", { x: x - 4.4, y: top, width: 8.8, height: bot - top, fill: "#000", stroke: COLORS.r, "stroke-width": 1.6 });
    } else {
      el(svg, "rect", { x: x - 5.2, y: top, width: 10.4, height: bot - top, fill: COLORS.c });
    }
  });

  ma.forEach(function (m) {
    var pts = m.z.map(function (z, i) { return X(i).toFixed(1) + "," + Y(i, z).toFixed(1); }).join(" ");
    el(svg, "polyline", { points: pts, fill: "none", stroke: m.color, "stroke-width": m.width, "stroke-linejoin": "round" });
  });

  // high / low notes
  el(svg, "path", { d: "M816 97 L816 104 M816 97 L833 103", stroke: "#b0b0b0", fill: "none", "stroke-width": 1.4 });
  el(svg, "text", { class: "note", x: 836, y: 112 }, "8.20");
  el(svg, "path", { d: "M443 731 L427 731 M432 726 L427 731 L432 736", stroke: "#b0b0b0", fill: "none", "stroke-width": 1.4 });
  el(svg, "text", { class: "note", x: 446, y: 740 }, "5.56");

  // signal marker
  el(svg, "rect", { x: 686, y: 521, width: 10, height: 7.5, fill: "#ff00ff" });
  el(svg, "circle", { cx: 690, cy: 545, r: 10, fill: "#f0e0a0", opacity: .9 });
  el(svg, "circle", { cx: 690, cy: 545, r: 7, fill: "#a07838" });
  el(svg, "path", { d: "M686 531 H694 L692 536 H688 Z", fill: "#e8c040" });
  el(svg, "text", { class: "tag", x: 690, y: 550, style: "font-size:13px;font-weight:700" }, "$");
  el(svg, "path", { d: "M704 538 L706 543 L711 543 L707 546 L709 551 L704 548 L699 551 L701 546 L697 543 L702 543 Z", fill: "#f8e800" });
  el(svg, "text", { class: "signal", x: 710, y: 552 }, "潜伏");

  // event tags
  [["榜", 799, "#8b4a14"], ["减", 1003, "#2a8a3a"], ["财", 1109, "#1f4aa0"]].forEach(function (t) {
    el(svg, "rect", { x: t[1] - 9, y: 756, width: 18, height: 18, fill: t[2] });
    el(svg, "text", { class: "tag", x: t[1], y: 770 }, t[0]);
  });

  el(svg, "text", { class: "gs-cn", x: 898, y: 707 }, "公式在线");
  el(svg, "text", { class: "gs-en", x: 1039, y: 707 }, "www.gszx.com.cn");

  /* ---------- indicator panel ---------- */
  var ind = document.getElementById("ind-chart");
  var iy = function (v) { return 1242 - v * 434; };
  var v;
  for (v = 2; v <= 10; v += 2) {
    y = iy(v / 10);
    el(ind, "line", { x1: 0, x2: 1711, y1: y, y2: y, stroke: GRID, "stroke-width": 1.5, "stroke-dasharray": "2 3.5" });
  }
  el(ind, "line", { x1: 1711, x2: 1711, y1: 798, y2: 1249, stroke: AXIS, "stroke-width": 2 });
  for (v = 1; v <= 10; v += 1) {
    y = iy(v / 10);
    el(ind, "line", { x1: 1711, x2: v % 2 ? 1716 : 1720, y1: y, y2: y, stroke: AXIS, "stroke-width": 1.5 });
    if (v >= 2) el(ind, "text", { class: "axis-label", x: 1779, y: y + 6.5 }, (v / 10).toFixed(2));
  }
  el(ind, "rect", { x: 1713, y: 830, width: 74, height: 24, fill: "#000088" });
  el(ind, "path", { d: "M1713 830 H1787 M1713 854 H1787", stroke: "#c00000", "stroke-width": 1.5 });
  el(ind, "text", { class: "ind-current", x: 1733, y: 848 }, "0.89");

  el(ind, "line", { x1: 6, x2: 1655, y1: 1240.5, y2: 1240.5, stroke: "#c8c8c8", "stroke-width": 1.5 });
  el(ind, "polyline", { points: X(43) + ",1240 " + X(44) + ",809 " + X(45) + ",1240", fill: "none", stroke: "#d0d0d0", "stroke-width": 1.5 });
  el(ind, "rect", { x: X(44) - 3, y: 807, width: 6, height: 3, fill: "#e0e0e0" });
  for (var k = 1; k * 4 <= 104; k++) {
    el(ind, "rect", { x: X(k * 4) - 3, y: 1238, width: 6, height: 4.5, fill: "#f0f0f0" });
  }

  /* ---------- date axis ---------- */
  var da = document.getElementById("date-axis");
  el(da, "rect", { x: 0, y: 1249, width: 1787, height: 23, fill: "#000" });
  el(da, "line", { x1: 0, x2: 1787, y1: 1249.5, y2: 1249.5, stroke: AXIS, "stroke-width": 2 });
  el(da, "line", { x1: 1711, x2: 1711, y1: 1249, y2: 1272, stroke: AXIS, "stroke-width": 2 });
  [285.6, 364, 440, 600, 957, 1040, 1121, 1288, 1373, 1458, 1625].forEach(function (x) {
    el(da, "line", { x1: x, x2: x, y1: 1249, y2: 1253, stroke: AXIS, "stroke-width": 1.2 });
  });
  [[207.5, "6"], [519, "7"], [877, "8"], [1202, "9"], [1544, "10"]].forEach(function (m) {
    el(da, "line", { x1: m[0], x2: m[0], y1: 1249, y2: 1272, stroke: AXIS, "stroke-width": 1.5 });
    el(da, "text", { class: "date-label", x: m[0] + 2, y: 1269 }, m[1]);
  });
  el(da, "text", { class: "date-label", x: 7, y: 1269 }, "2025年");
  el(da, "rect", { x: 757, y: 1250, width: 117, height: 22, fill: "#000090" });
  el(da, "text", { class: "date-cursor", x: 758, y: 1268 }, "2025/07/22/二");
  el(da, "text", { class: "date-unit", x: 1749, y: 1268 }, "日线");
})();
```
